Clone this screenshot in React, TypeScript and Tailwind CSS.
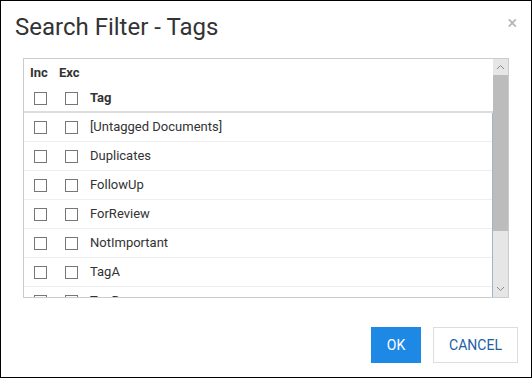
import React from "react";

const tags = [
  "[Untagged Documents]",
  "Duplicates",
  "FollowUp",
  "ForReview",
  "NotImportant",
  "TagA",
  "TagB",
];

function Box() {
  return <div className="w-[13px] h-[13px] border border-[#767676] bg-white" />;
}

export default function App() {
  return (
    <div className="w-[532px] h-[378px] border border-black bg-white flex flex-col relative font-['Roboto',sans-serif] text-[#333]">
      <div className="pl-[14px] pt-[12px] text-[24px] leading-[28px] text-[#333]">
        Search Filter - Tags
      </div>
      <div className="absolute right-[14px] top-[13px] text-[#b5b5b5] text-[18px] leading-[18px]">
        ×
      </div>

      <div className="ml-[22px] mt-[17px] w-[486px] h-[240px] border border-[#cccccc] flex">
        <div className="flex-1 flex flex-col min-w-0">
          <div className="h-[54px] border-b-2 border-[#dddddd] flex flex-col">
            <div className="h-[26px] flex items-center text-[13px] font-bold text-[#333]">
              <div className="w-[31px] pl-[6px] pt-[2px]">Inc</div>
              <div className="w-[31px] pl-[4px] pt-[2px]">Exc</div>
            </div>
            <div className="h-[26px] flex items-center">
              <div className="w-[31px] flex justify-center pl-[2px]">
                <Box />
              </div>
              <div className="w-[31px] flex justify-center pl-[2px]">
                <Box />
              </div>
              <div className="pl-[4px] text-[13px] font-bold text-[#333]">Tag</div>
            </div>
          </div>
          <div className="h-[184px] overflow-hidden border-r border-[#9fb4c9]">
            {tags.map((t) => (
              <div
                key={t}
                className="h-[29px] border-b border-[#eeeeee] flex items-center"
              >
                <div className="w-[31px] flex justify-center pl-[2px] pt-[1px]">
                  <Box />
                </div>
                <div className="w-[31px] flex justify-center pl-[2px] pt-[1px]">
                  <Box />
                </div>
                <div className="pl-[4px] text-[13px] text-[#333]">{t}</div>
              </div>
            ))}
          </div>
        </div>
        <div className="w-[15px] bg-[#e6e6e6] flex flex-col">
          <div className="h-[16px] flex items-center justify-center">
            <svg width="9" height="6" viewBox="0 0 9 6">
              <path d="M1 5 L4.5 1.5 L8 5" fill="none" stroke="#8a8a8a" strokeWidth="1" />
            </svg>
          </div>
          <div className="h-[156px] bg-[#bcbcbc]" />
          <div className="flex-1" />
          <div className="h-[16px] flex items-center justify-center">
            <svg width="9" height="6" viewBox="0 0 9 6">
              <path d="M1 1 L4.5 4.5 L8 1" fill="none" stroke="#8a8a8a" strokeWidth="1" />
            </svg>
          </div>
        </div>
      </div>

      <div className="mt-[29px] flex justify-end gap-[12px] pr-[13px]">
        <button className="w-[50px] h-[36px] bg-[#1e88e5] text-white text-[14px] flex items-center justify-center">
          OK
        </button>
        <button className="w-[85px] h-[36px] bg-white border border-[#dddddd] text-[#1d5ea8] text-[14px] flex items-center justify-center">
          CANCEL
        </button>
      </div>
    </div>
  );
}
